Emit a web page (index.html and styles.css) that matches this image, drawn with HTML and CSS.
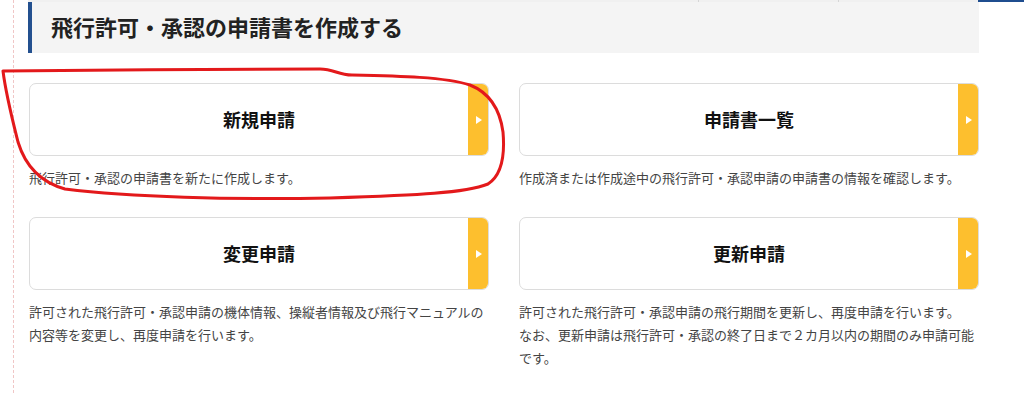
FILE: index.html
```html
<!DOCTYPE html>
<html lang="ja">
<head>
  <meta charset="UTF-8">
  <title>飛行許可・承認の申請書を作成する</title>
  <meta name="viewport" content="width=device-width, initial-scale=1">
  <link rel="stylesheet" href="styles.css">
</head>
<body>
  <div class="page">
    <!-- 上部のタブ帯 -->
    <div class="topstrip">
      <span class="seg"></span>
      <span class="seg"></span>
      <span class="seg last"></span>
      <span class="seg active"></span>
    </div>

    <div class="content">
      <h1 class="section-title">飛行許可・承認の申請書を作成する</h1>

      <div class="menu-grid">
        <div class="menu-item">
          <a class="menu-btn" href="#">
            <span class="label">新規申請</span>
            <span class="arrow"></span>
          </a>
          <p class="desc">飛行許可・承認の申請書を新たに作成します。</p>
        </div>
        <div class="menu-item">
          <a class="menu-btn" href="#">
            <span class="label">申請書一覧</span>
            <span class="arrow"></span>
          </a>
          <p class="desc">作成済または作成途中の飛行許可・承認申請の申請書の情報を確認します。</p>
        </div>
        <div class="menu-item">
          <a class="menu-btn" href="#">
            <span class="label">変更申請</span>
            <span class="arrow"></span>
          </a>
          <p class="desc">許可された飛行許可・承認申請の機体情報、操縦者情報及び飛行マニュアルの内容等を変更し、再度申請を行います。</p>
        </div>
        <div class="menu-item">
          <a class="menu-btn" href="#">
            <span class="label">更新申請</span>
            <span class="arrow"></span>
          </a>
          <p class="desc">許可された飛行許可・承認申請の飛行期間を更新し、再度申請を行います。<br>なお、更新申請は飛行許可・承認の終了日まで２カ月以内の期間のみ申請可能です。</p>
        </div>
      </div>
    </div>
  </div>

  <!-- 手書きの赤丸 -->
  <svg class="markup" width="1024" height="393" viewBox="0 0 1024 393">
    <path d="M3,71 C90,70 250,69 320,69 C334,69 338,75 352,75 C400,76 445,77 470,85 C490,93 500,110 503,132 C505,155 502,175 488,184 C465,193 420,195 330,198 C230,200 130,197 65,189 C40,182 25,165 18,142 C12,118 6,95 3,71 Z"
          fill="none" stroke="#e3191b" stroke-width="3" stroke-linejoin="round"/>
  </svg>
</body>
</html>
```

FILE: styles.css
```css
body {
  margin: 0;
  background: #fff;
  font-family: "Noto Sans CJK JP", "Noto Sans", sans-serif;
  color: #333;
}
.page {
  margin-left: 13px;
  border-left: 1px dashed #f0c6c6;
  min-height: 393px;
  box-sizing: border-box;
}
.topstrip {
  display: flex;
  height: 2px;
  margin-left: 14px;
}
.topstrip .seg {
  flex: 0 0 auto;
  height: 2px;
  background: #f0f0f0;
  border-right: 1px solid #d6d6d6;
}
.topstrip .seg:nth-child(1) { width: 670px; }
.topstrip .seg:nth-child(2) { width: 139px; }
.topstrip .seg.last { width: 139px; border-right: none; }
.topstrip .seg.active { flex: 1; background: #1f4d8f; border-right: none; }

.content {
  padding-left: 14px;
  width: 951px;
}
.section-title {
  margin: 0;
  height: 51px;
  box-sizing: border-box;
  background: #f4f4f4;
  border-left: 4px solid #23508f;
  padding-left: 19px;
  display: flex;
  align-items: center;
  font-size: 22px;
  font-weight: bold;
  color: #222;
  line-height: 1;
  padding-bottom: 3px;
}
.menu-grid {
  display: grid;
  grid-template-columns: 460px 460px;
  column-gap: 30px;
  row-gap: 28px;
  margin: 30px 0 0 1px;
}
.menu-btn {
  display: flex;
  height: 73px;
  box-sizing: border-box;
  border: 1px solid #dcdcdc;
  border-radius: 7px;
  overflow: hidden;
  text-decoration: none;
  position: relative;
  background: #fff;
}
.menu-btn .label {
  position: absolute;
  left: 0; right: 0; top: 0; bottom: 0;
  display: flex;
  justify-content: center;
  align-items: center;
  font-size: 18px;
  font-weight: bold;
  color: #111;
  padding-bottom: 1px;
}
.menu-btn .arrow {
  margin-left: auto;
  width: 20px;
  background: #fdbf2e;
  display: flex;
  justify-content: center;
  align-items: center;
}
.menu-btn .arrow::before {
  content: "";
  border-left: 6px solid #fff;
  border-top: 4px solid transparent;
  border-bottom: 4px solid transparent;
  margin-left: 2px;
}
.desc {
  margin: 10px 0 0 0;
  font-size: 13px;
  line-height: 23px;
  color: #444;
}
.markup {
  position: absolute;
  left: 0;
  top: 0;
  pointer-events: none;
}
```
